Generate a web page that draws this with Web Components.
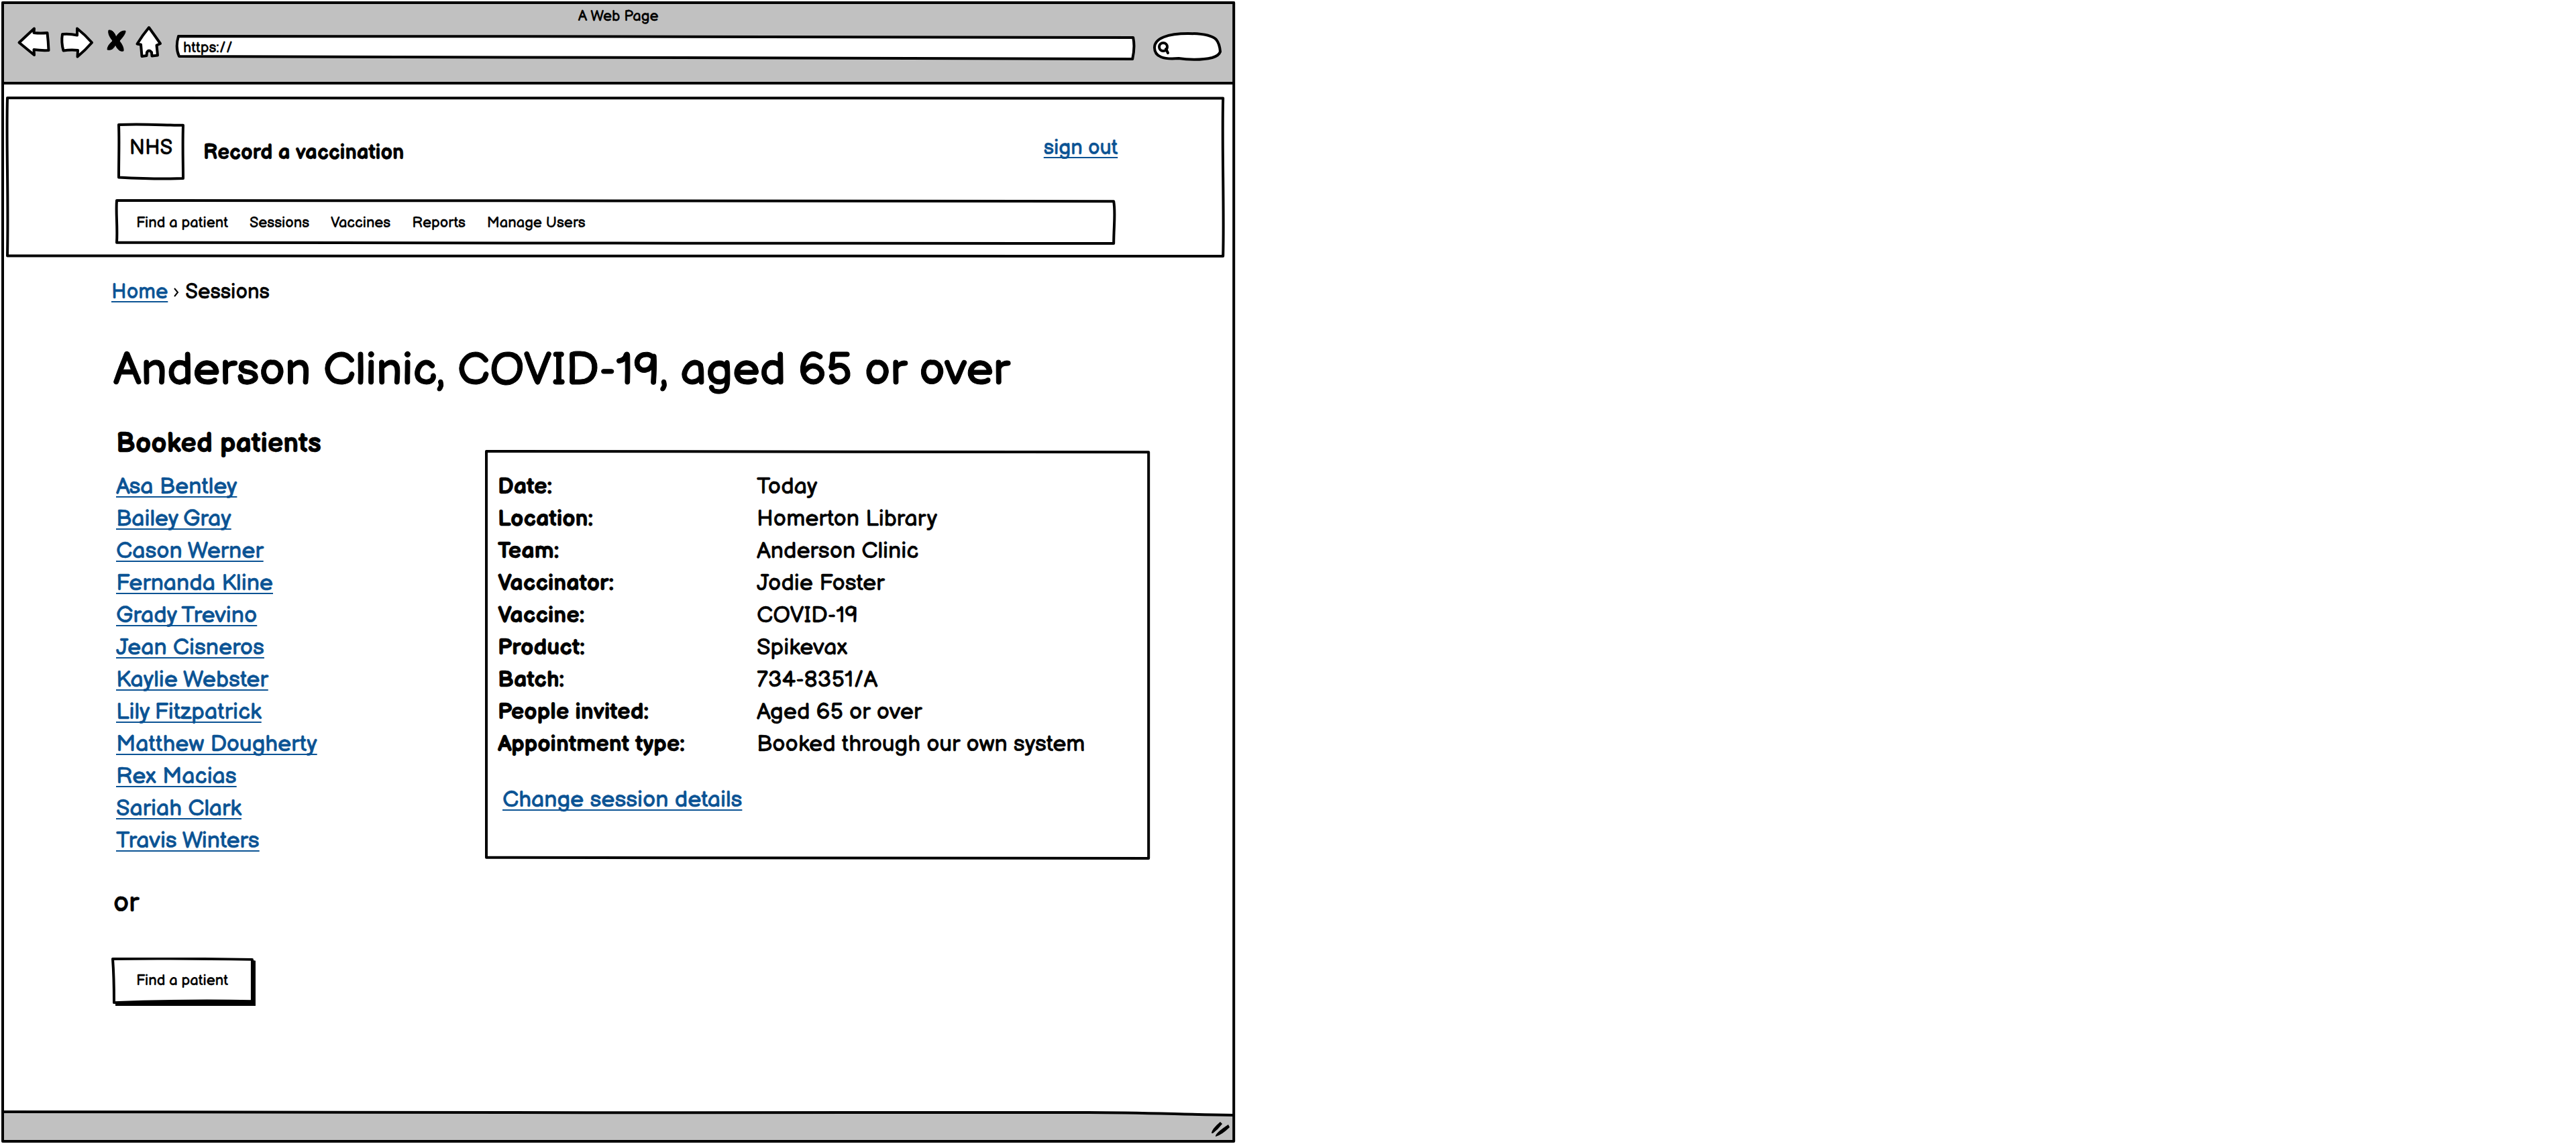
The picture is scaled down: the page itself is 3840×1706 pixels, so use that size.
<!DOCTYPE html>
<html lang="en">
<head>
<meta charset="utf-8">
<title>Record a vaccination</title>
<style>
  body {
    margin: 0;
    background: #fff;
    color: #000;
    font: 400 34px/48px "Balsamiq Sans", Lato, "Liberation Sans", sans-serif;
    --ink: #000;
    --chrome: #c1c1c1;
    --link: #0b5394;
    --pen: 0.015em;
  }
</style>
</head>
<body>
<wire-window heading="A Web Page" address="https://">
  <app-header service="Record a vaccination"></app-header>
  <session-page></session-page>
</wire-window>

<script>
const LINK_CSS = `
  a { color: var(--link); text-decoration: underline; text-decoration-thickness: 2px; text-underline-offset: 4px; text-decoration-skip-ink: none; }
`;

/* A box with a slightly uneven, hand-drawn outline. */
class SketchFrame extends HTMLElement {
  connectedCallback() {
    const shapes = {
      wide: 'M0 0 C30 -.1 60 .2 100 .2 C99.9 30 100.1 70 100 100 C60 99.9 20 100.2 0 99.8 C.1 60 -.1 30 0 0Z',
      bar: 'M0 0 C30 -1 70 2 100 2 C100.2 30 100 60 100 100 C70 99 30 100 0 98 C.1 60 -.1 30 0 0Z',
      small: 'M0 0 C40 -2 70 1 100 1 C99 40 100 70 100 100 C60 102 30 100 0 98 C0 60 1 30 0 0Z'
    };
    this.attachShadow({ mode: 'open' }).innerHTML = `
      <style>
        :host { display: block; position: relative; box-sizing: border-box; }
        svg { position: absolute; inset: 2px; width: calc(100% - 4px); height: calc(100% - 4px); overflow: visible; pointer-events: none; }
      </style>
      <svg viewBox="0 0 100 100" preserveAspectRatio="none" aria-hidden="true">
        <path d="${shapes[this.getAttribute('shape')] || shapes.wide}" fill="none" stroke="var(--ink)" stroke-width="4" stroke-linejoin="round" vector-effect="non-scaling-stroke"/>
      </svg>
      <slot></slot>`;
  }
}

/* Browser window: toolbar, page area and status bar. */
class WireWindow extends HTMLElement {
  connectedCallback() {
    this.attachShadow({ mode: 'open' }).innerHTML = `
      <style>
        :host { display: flex; flex-direction: column; position: relative; box-sizing: border-box; width: calc(48% - 4px); min-width: 1400px; min-height: calc(100vh - 4px); margin: 2px; }
        .bar { box-sizing: border-box; background: var(--chrome); border-bottom: 4px solid var(--ink); height: 124px; padding-top: 9px; }
        .title { font-size: 22px; line-height: 28px; text-align: center; -webkit-text-stroke: var(--pen); }
        .tools { display: flex; align-items: flex-end; gap: 18px; height: 51px; padding: 0 20px 0 24px; }
        nav { display: flex; gap: 12px; }
        button { appearance: none; border: 0; padding: 0; background: none; display: block; height: 51px; }
        svg { display: block; overflow: visible; }
        .tools path { stroke: var(--ink); stroke-width: 4; stroke-linejoin: round; }
        .field { position: relative; flex: 1; height: 37px; }
        .search { position: relative; width: 102px; height: 43px; margin-left: 8px; }
        .field > svg, .search > svg { position: absolute; inset: 0; width: 100%; height: 100%; }
        input { display: block; position: relative; box-sizing: border-box; width: 100%; height: 100%; border: 0; outline: 0; margin: 0; background: none; padding: 0 11px; font: inherit; font-size: 22px; line-height: 28px; color: inherit; appearance: none; -webkit-text-stroke: var(--pen); }
        .search input { padding: 0 12px 0 26px; }
        main { flex: 1; background: #fff; }
        footer { height: 48px; }
        footer > svg { width: 100%; height: 100%; }
        footer { position: relative; display: flex; justify-content: flex-end; }
        footer > .base { position: absolute; inset: 0; }
        footer > .grip { position: relative; width: 44px; height: 48px; }
        .edge { position: absolute; inset: 2px; width: calc(100% - 4px); height: calc(100% - 4px); pointer-events: none; }
      </style>
      <div class="bar">
        <div class="title">${this.getAttribute('heading')}</div>
        <div class="tools">
          <nav aria-label="Browser">
            <button aria-label="Back"><svg width="50" height="51" viewBox="26 39 50 51"><path fill="#fff" d="M28.500 63.500L51 42.500L50.500 49Q61 50 70.500 49Q72 62 72.500 75Q61 75.500 50.500 74L51 82Z"/></svg></button>
            <button aria-label="Forward"><svg width="54" height="51" viewBox="88 39 54 51"><path fill="#fff" d="M93 51Q104 50 115 52.500L115 42.500Q127 52 137 63.500Q127 75 115.500 84.500L116 75Q105 74 94.500 75.500Q91 63 93 51Z"/></svg></button>
            <button aria-label="Stop"><svg width="36" height="51" viewBox="154 39 36 51"><path style="stroke-width:1" d="M162 45Q169 44 173 55Q179 45 187 46Q188 50 178 61Q185 70 184 76Q177 78 172 67Q168 76 160 74Q160 68 168 61Q160 51 162 45Z"/></svg></button>
            <button aria-label="Home"><svg width="42" height="51" viewBox="202 39 42 51"><path fill="#fff" d="M222 41Q230 52 239 65L233.500 67.500L235 82.500L226.500 83.500L226 78Q222 73 219 78L218.500 83L211.500 84L210 66.500L204.500 65.500Q212 53 222 41Z"/></svg></button>
          </nav>
          <div class="field">
            <svg viewBox="0 0 1431 37" preserveAspectRatio="none" aria-hidden="true"><path fill="#fff" vector-effect="non-scaling-stroke" d="M4 1C480 0 950 3 1427 3Q1430 17 1426 35C950 34 480 32 5 31Q-1 18 4 1Z"/></svg>
            <input type="text" aria-label="Address" value="${this.getAttribute('address')}">
          </div>
          <div class="search">
            <svg viewBox="0 0 102 43" aria-hidden="true"><path fill="#fff" d="M2 24C2 10 22 3 52 3C76 3 88 6 94 12Q99 18 100 30Q98 36 88 39C72 43 50 42 38 40C16 42 2 38 2 24Z"/><circle cx="15" cy="23" r="6" fill="#fff" stroke="#000" stroke-width="4"/><path fill="none" stroke-linecap="round" d="M19 26L22 32"/></svg>
            <input type="search" aria-label="Search">
          </div>
        </div>
      </div>
      <main><slot></slot></main>
      <footer>
        <svg class="base" viewBox="0 0 1839 48" preserveAspectRatio="none" aria-hidden="true"><path fill="var(--chrome)" d="M2 1C300 4 1200 2 1600 2C1700 3 1760 5 1837 7V46H2Z"/><path fill="none" stroke="var(--ink)" stroke-width="4" vector-effect="non-scaling-stroke" d="M2 2C300 5 1200 2 1620 3C1700 3 1760 6 1837 7"/></svg>
        <svg class="grip" viewBox="1797 1656 44 48" aria-hidden="true"><path d="M1806 1690Q1806 1684 1819 1673L1822 1676Q1816 1684 1808 1690Z"/><path d="M1812 1695Q1811 1690 1831 1677L1833 1681Q1822 1692 1812 1695Z"/></svg>
      </footer>
      <svg class="edge" viewBox="0 0 100 100" preserveAspectRatio="none" aria-hidden="true"><path fill="none" stroke="var(--ink)" stroke-width="4" stroke-linejoin="round" vector-effect="non-scaling-stroke" d="M0 0H100V100H50C30 99.900 15 100 0 100Z"/></svg>`;
  }
}

/* Site header with logo, service name, account link and main navigation. */
class AppHeader extends HTMLElement {
  connectedCallback() {
    const items = ['Find a patient', 'Sessions', 'Vaccines', 'Reports', 'Manage Users'];
    this.attachShadow({ mode: 'open' }).innerHTML = `
      <style>${LINK_CSS}
        :host { display: block; margin: 18px 16px 0 7px; font-size: 31px; line-height: 38px; }
        .outer { padding: 40px 159px 19px 163px; }
        .top { display: flex; align-items: center; gap: 28px; padding-left: 3px; -webkit-text-stroke: var(--pen); }
        .logo { width: 100px; height: 84px; padding-top: 18px; text-align: center; }
        .name { font-weight: 700; padding-top: 4px; }
        .account { margin-left: auto; align-self: flex-start; padding-top: 18px; }
        .menu { margin: 29px 4px 0 0; padding: 22px 31px 18px; font-size: 22px; line-height: 28px; -webkit-text-stroke: var(--pen); }
        nav { display: flex; gap: 32px; }
        nav a { color: inherit; text-decoration: none; }
      </style>
      <sketch-frame class="outer">
        <div class="top">
          <sketch-frame class="logo" shape="small">NHS</sketch-frame>
          <span class="name">${this.getAttribute('service')}</span>
          <span class="account"><a href="#sign-out">sign out</a></span>
        </div>
        <sketch-frame class="menu" shape="bar">
          <nav aria-label="Main">${items.map(t => `<a href="#">${t}</a>`).join('')}</nav>
        </sketch-frame>
      </sketch-frame>`;
  }
}

class CrumbTrail extends HTMLElement {
  connectedCallback() {
    this.attachShadow({ mode: 'open' }).innerHTML = `
      <style>${LINK_CSS}
        :host { display: block; font-size: 31px; line-height: 38px; -webkit-text-stroke: var(--pen); }
        nav { display: flex; align-items: center; gap: 9px; }
        svg { display: block; }
      </style>
      <nav aria-label="Breadcrumb">
        <a href="#home">Home</a>
        <svg width="8" height="14" viewBox="0 0 8 14" aria-hidden="true"><path d="M1 1L6 7L1 13" fill="none" stroke="currentColor" stroke-width="2"/></svg>
        <span><slot></slot></span>
      </nav>`;
  }
}

class PatientList extends HTMLElement {
  connectedCallback() {
    const names = ['Asa Bentley', 'Bailey Gray', 'Cason Werner', 'Fernanda Kline', 'Grady Trevino', 'Jean Cisneros',
      'Kaylie Webster', 'Lily Fitzpatrick', 'Matthew Dougherty', 'Rex Macias', 'Sariah Clark', 'Travis Winters'];
    this.attachShadow({ mode: 'open' }).innerHTML = `
      <style>${LINK_CSS}
        :host { display: block; -webkit-text-stroke: var(--pen); }
        h2 { margin: 0 0 14px; font-size: 41px; line-height: 52px; font-weight: 700; }
        ul { margin: 0; padding: 0; list-style: none; }
      </style>
      <h2>Booked patients</h2>
      <ul>${names.map(n => `<li><a href="#">${n}</a></li>`).join('')}</ul>`;
  }
}

class SessionDetails extends HTMLElement {
  connectedCallback() {
    const rows = [['Date', 'Today'], ['Location', 'Homerton Library'], ['Team', 'Anderson Clinic'], ['Vaccinator', 'Jodie Foster'],
      ['Vaccine', 'COVID-19'], ['Product', 'Spikevax'], ['Batch', '734-8351/A'], ['People invited', 'Aged 65 or over'],
      ['Appointment type', 'Booked through our own system']];
    this.attachShadow({ mode: 'open' }).innerHTML = `
      <style>${LINK_CSS}
        :host { display: block; -webkit-text-stroke: var(--pen); }
        sketch-frame { padding: 31px 18px 65px 19px; }
        dl { display: grid; grid-template-columns: 386px 1fr; margin: 0 0 35px; }
        dt { font-weight: 700; }
        dd { margin: 0; }
        .change { padding-left: 7px; }
      </style>
      <sketch-frame>
        <dl>${rows.map(([k, v]) => `<dt>${k}:</dt><dd>${v}</dd>`).join('')}</dl>
        <div class="change"><a href="#change">Change session details</a></div>
      </sketch-frame>`;
  }
}

/* Push button with a heavy drawn shadow on its right and lower sides. */
class SketchButton extends HTMLElement {
  connectedCallback() {
    this.attachShadow({ mode: 'open' }).innerHTML = `
      <style>
        :host { display: inline-block; }
        button { position: relative; appearance: none; border: 0; background: none; padding: 21px 41px 23px 37px; font: inherit; font-size: 22px; line-height: 28px; color: inherit; -webkit-text-stroke: var(--pen); }
        svg { position: absolute; inset: 0; width: 100%; height: 100%; }
        span { position: relative; }
      </style>
      <button>
        <svg viewBox="0 0 214 74" preserveAspectRatio="none" aria-hidden="true">
          <path d="M6 66L207 66L207 3L214 5V74H6Z"/>
          <path fill="#fff" stroke="#000" stroke-width="4" stroke-linejoin="round" d="M2 2Q100 1 209 3V67Q110 65 4 69Q4 30 2 2Z"/>
        </svg>
        <span><slot></slot></span>
      </button>`;
  }
}

class SessionPage extends HTMLElement {
  connectedCallback() {
    this.attachShadow({ mode: 'open' }).innerHTML = `
      <style>
        :host { display: block; padding: 33px 127px 0 164px; }
        h1 { margin: 56px 0 41px; padding-left: 3px; font-size: 68px; line-height: 84px; font-weight: 400; -webkit-text-stroke: var(--pen); }
        .columns { display: grid; grid-template-columns: 550px 1fr; align-items: start; padding-left: 7px; }
        session-details { margin-top: 35px; }
        .or { margin: 39px 0 55px; padding-left: 3px; font-size: 41px; line-height: 52px; -webkit-text-stroke: var(--pen); }
      </style>
      <crumb-trail>Sessions</crumb-trail>
      <h1>Anderson Clinic, COVID-19, aged 65 or over</h1>
      <div class="columns">
        <patient-list></patient-list>
        <session-details></session-details>
      </div>
      <p class="or">or</p>
      <sketch-button>Find a patient</sketch-button>`;
  }
}

customElements.define('sketch-frame', SketchFrame);
customElements.define('sketch-button', SketchButton);
customElements.define('crumb-trail', CrumbTrail);
customElements.define('patient-list', PatientList);
customElements.define('session-details', SessionDetails);
customElements.define('app-header', AppHeader);
customElements.define('session-page', SessionPage);
customElements.define('wire-window', WireWindow);
</script>
</body>
</html>
